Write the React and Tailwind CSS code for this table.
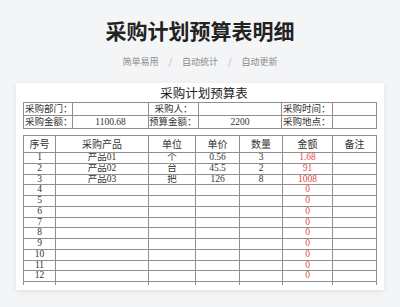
import React from "react";

const serif = { fontFamily: '"Liberation Serif", "Noto Sans CJK SC", serif' };

const itemCols = "grid grid-cols-[32px_93px_47px_44px_43px_50px_44px]";
const infoCols = "grid grid-cols-[49px_76px_50px_83px_51px_44px]";

const rows = [
  ["1", "产品01", "个", "0.56", "3", "1.68"],
  ["2", "产品02", "台", "45.5", "2", "91"],
  ["3", "产品03", "把", "126", "8", "1008"],
];
for (let i = 4; i <= 12; i++) rows.push([String(i), "", "", "", "", "0"]);

function Cell({ children, className = "" }) {
  return (
    <div
      className={
        "border-r border-b border-[#8f8f8f] flex items-center overflow-hidden whitespace-nowrap " +
        className
      }
    >
      {children}
    </div>
  );
}

export default function App() {
  return (
    <div
      className="w-[400px] h-[307px] bg-[#f4f5f7] overflow-hidden"
      style={{ fontFamily: '"Noto Sans CJK SC", sans-serif' }}
    >
      <h1 className="pt-[16px] text-[21px] leading-[28px] text-center font-bold text-[#222]">
        采购计划预算表明细
      </h1>
      <div className="mt-[11px] leading-[14px] text-[9px] text-[#8a8a8a] flex justify-center gap-[10px]">
        <span>简单易用</span>
        <span className="text-[#b0b0b0]">/</span>
        <span>自动统计</span>
        <span className="text-[#b0b0b0]">/</span>
        <span>自动更新</span>
      </div>

      <div
        className="mt-[14px] mx-4 h-[207px] bg-white px-[7px] shadow-[0_2px_6px_rgba(0,0,0,0.08)]"
        style={serif}
      >
        <div className="h-[19px] pt-[4px] text-center text-[12.5px] leading-[14px] text-[#222] pl-[8px]">
          采购计划预算表
        </div>

        <div className="border-t border-l border-[#8f8f8f] text-[9.5px] text-[#333]">
          <div className={infoCols + " h-[13px]"}>
            <Cell className="pl-[1px]">采购部门：</Cell>
            <Cell></Cell>
            <Cell className="justify-center">采购人：</Cell>
            <Cell></Cell>
            <Cell className="pl-[1px]">采购时间：</Cell>
            <Cell></Cell>
          </div>
          <div className={infoCols + " h-[13px]"}>
            <Cell className="pl-[1px]">采购金额：</Cell>
            <Cell className="justify-center">1100.68</Cell>
            <Cell>预算金额：</Cell>
            <Cell className="justify-center">2200</Cell>
            <Cell className="pl-[1px]">采购地点：</Cell>
            <Cell></Cell>
          </div>
        </div>

        <div className="mt-[6px] border-t border-l border-[#8f8f8f] text-[#333]">
          <div className={itemCols + " h-[17px] text-[10px]"}>
            {["序号", "采购产品", "单位", "单价", "数量", "金额", "备注"].map((h) => (
              <Cell key={h} className="justify-center">
                {h}
              </Cell>
            ))}
          </div>
          {rows.map((r) => (
            <div key={r[0]} className={itemCols + " h-[10.75px] text-[9.5px] leading-none"}>
              <Cell className="justify-center">{r[0]}</Cell>
              <Cell className="justify-center">{r[1]}</Cell>
              <Cell className="justify-center">{r[2]}</Cell>
              <Cell className="justify-center">{r[3]}</Cell>
              <Cell className="justify-center">{r[4]}</Cell>
              <Cell className="justify-center text-[#e04848]">{r[5]}</Cell>
              <Cell></Cell>
            </div>
          ))}
          <div className={itemCols + " h-[3px]"}>
            {[0, 1, 2, 3, 4, 5, 6].map((i) => (
              <div key={i} className="border-r border-[#8f8f8f]"></div>
            ))}
          </div>
        </div>
      </div>
    </div>
  );
}
